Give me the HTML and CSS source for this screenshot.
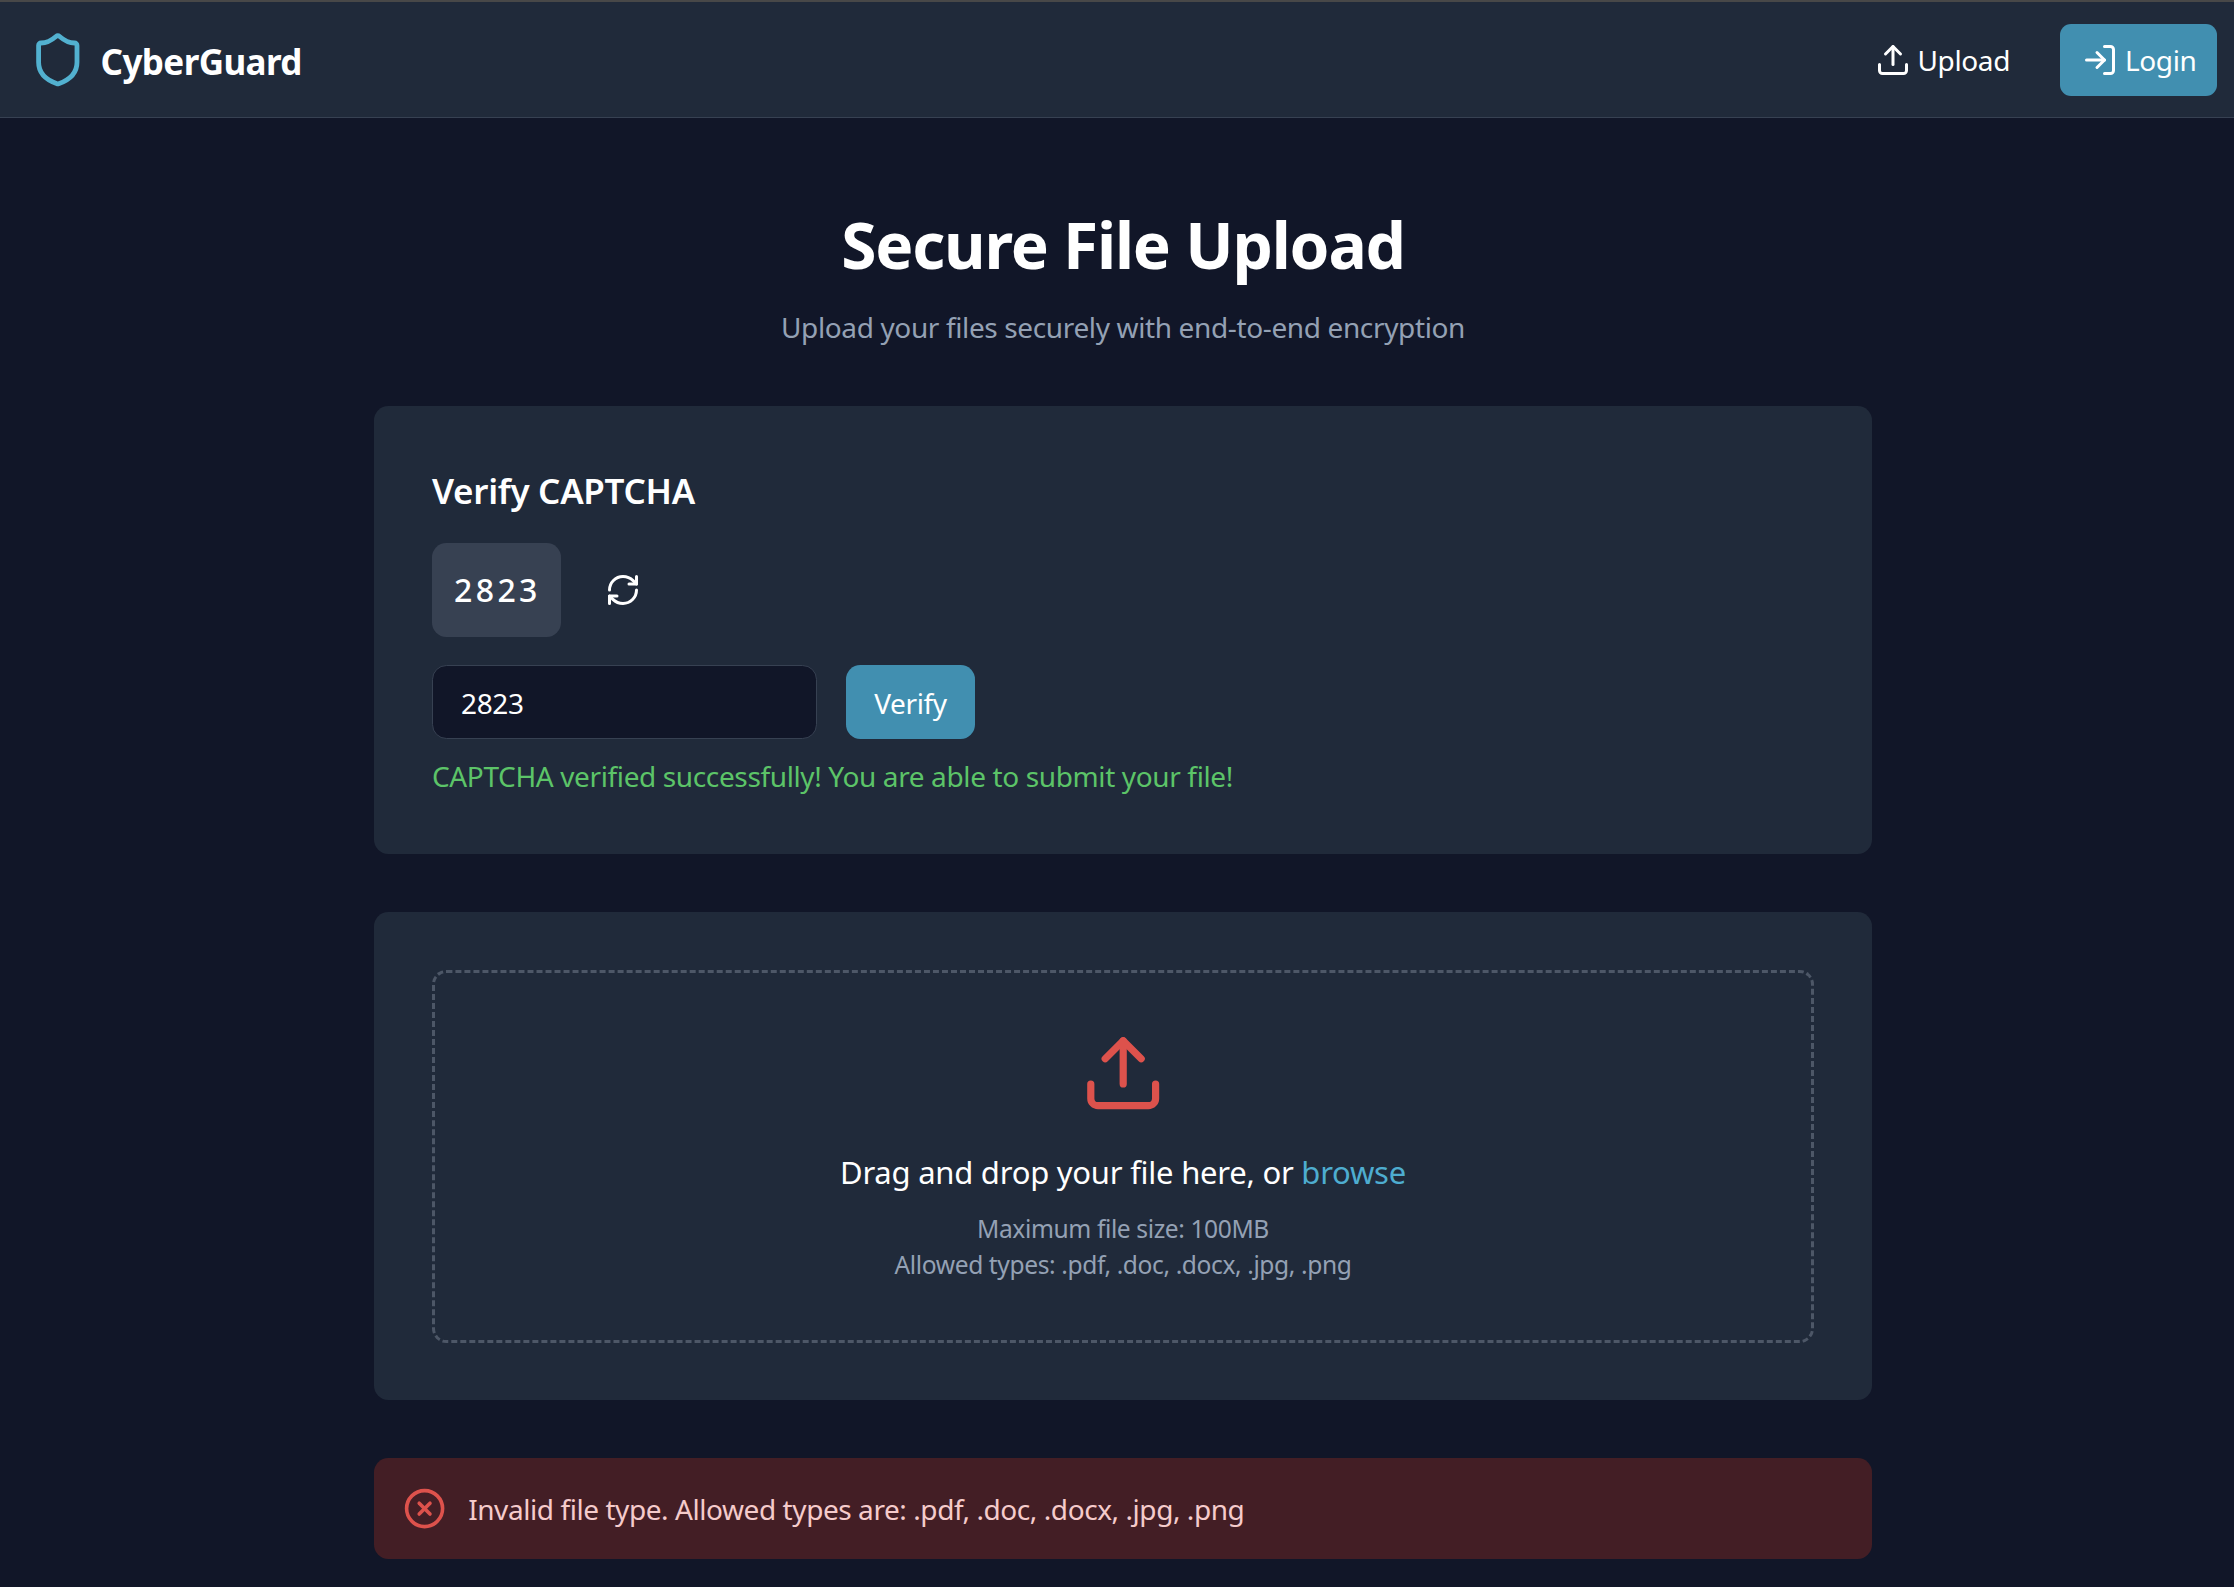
FILE: index.html
```html
<!DOCTYPE html>
<html lang="en">
<head>
<meta charset="utf-8">
<title>CyberGuard</title>
<link rel="stylesheet" href="styles.css">
</head>
<body>
<header class="navbar">
  <a class="brand">
    <svg class="icon brand-icon" viewBox="0 0 24 24"><path d="M20 13c0 5-3.500 7.500-7.660 8.950a1 1 0 0 1-.67-.01C7.500 20.500 4 18 4 13V6a1 1 0 0 1 1-1c2 0 4.500-1.200 6.240-2.720a1.170 1.170 0 0 1 1.520 0C14.510 3.810 17 5 19 5a1 1 0 0 1 1 1z"/></svg>
    <span class="brand-name">CyberGuard</span>
  </a>
  <nav class="nav-links">
    <a class="nav-link">
      <svg class="icon nav-icon" viewBox="0 0 24 24"><path d="M21 15v4a2 2 0 0 1-2 2H5a2 2 0 0 1-2-2v-4"/><path d="M17 8l-5-5-5 5"/><path d="M12 3v12"/></svg>
      <span class="nav-label">Upload</span>
    </a>
    <a class="login-button">
      <svg class="icon nav-icon" viewBox="0 0 24 24"><path d="M15 3h4a2 2 0 0 1 2 2v14a2 2 0 0 1-2 2h-4"/><path d="M10 17l5-5-5-5"/><path d="M15 12H3"/></svg>
      <span class="nav-label">Login</span>
    </a>
  </nav>
</header>
<main class="page">
  <h1 class="title">Secure File Upload</h1>
  <p class="subtitle">Upload your files securely with end-to-end encryption</p>

  <section class="card captcha">
    <h2 class="captcha-title">Verify CAPTCHA</h2>
    <div class="captcha-row">
      <div class="captcha-code">2823</div>
      <button class="refresh" aria-label="Refresh">
        <svg class="icon nav-icon" viewBox="0 0 24 24"><path d="M3 12a9 9 0 0 1 9-9 9.750 9.750 0 0 1 6.740 2.740L21 8"/><path d="M21 3v5h-5"/><path d="M21 12a9 9 0 0 1-9 9 9.750 9.750 0 0 1-6.740-2.740L3 16"/><path d="M8 16H3v5"/></svg>
      </button>
    </div>
    <div class="verify-row">
      <input class="captcha-input" type="text" value="2823">
      <button class="verify-button">Verify</button>
    </div>
    <p class="success">CAPTCHA verified successfully! You are able to submit your file!</p>
  </section>

  <section class="card upload">
    <div class="dropzone">
      <svg class="icon drop-icon" viewBox="0 0 24 24"><path d="M21 15v4a2 2 0 0 1-2 2H5a2 2 0 0 1-2-2v-4"/><path d="M17 8l-5-5-5 5"/><path d="M12 3v12"/></svg>
      <p class="drop-text">Drag and drop your file here, or <a class="browse">browse</a></p>
      <p class="hint hint-size">Maximum file size: 100MB</p>
      <p class="hint">Allowed types: .pdf, .doc, .docx, .jpg, .png</p>
    </div>
  </section>

  <div class="alert">
    <svg class="icon alert-icon" viewBox="0 0 24 24"><circle cx="12" cy="12" r="10"/><path d="M15 9l-6 6"/><path d="M9 9l6 6"/></svg>
    <span class="alert-text">Invalid file type. Allowed types are: .pdf, .doc, .docx, .jpg, .png</span>
  </div>
</main>
</body>
</html>
```
FILE: styles.css
```css
* { box-sizing: border-box; margin: 0; padding: 0; }
body {
  height: 1587px;
  overflow: hidden;
  background: #111628;
  color: #fff;
  font-family: "Noto Sans", "Open Sans", sans-serif;
  font-size: 28px;
  line-height: 43px;
  letter-spacing: -0.37px;
}
button, input { font: inherit; color: inherit; letter-spacing: inherit; border: 0; background: none; }
.icon { display: block; flex: none; fill: none; stroke: currentColor; stroke-width: 2; stroke-linecap: round; stroke-linejoin: round; }

.navbar {
  display: flex; align-items: center; justify-content: space-between;
  height: 118px; padding: 0 17px 0 29px;
  background: #202a3a;
  border-top: 2px solid #484848; border-bottom: 1px solid #374152;
}
.brand { display: flex; align-items: center; gap: 14px; }
.brand-icon { width: 57.6px; height: 57.6px; color: #52b1d0; }
.brand-name { padding-top: 3px; font-size: 35px; font-weight: 700; letter-spacing: -0.6px; }
.nav-links { display: flex; align-items: center; gap: 50px; }
.nav-link { display: flex; align-items: center; gap: 6px; }
.nav-icon { width: 36px; height: 36px; }
.nav-label { padding-top: 2px; }
.login-button {
  display: flex; align-items: center; gap: 7px;
  width: 157px; height: 72px; padding-left: 22px;
  border-radius: 11px; background: #418fb0;
}

.page { width: 1498px; margin: 0 0 0 374px; padding-top: 91px; }
.title { font-size: 64px; line-height: 72px; font-weight: 700; letter-spacing: -1.2px; text-align: center; }
.subtitle { margin: 25px 0 57px; color: #94a1b4; text-align: center; }
.card { padding: 58px; border-radius: 14.4px; background: #202a3a; margin-bottom: 58px; }
.captcha { height: 448px; padding-top: 60px; }
.captcha-title { font-size: 35px; line-height: 50px; font-weight: 600; letter-spacing: -0.3px; }
.captcha-row { display: flex; align-items: center; gap: 44px; margin-top: 27px; }
.captcha-code {
  width: 129px; height: 94px; padding-left: 22px;
  border-radius: 14.4px; background: #374152;
  font-size: 32px; line-height: 94px; font-weight: 500; letter-spacing: 3.4px;
}
.refresh { display: flex; }
.verify-row { display: flex; gap: 29px; margin-top: 28px; }
.captcha-input {
  width: 385px; height: 74px; padding: 2px 28px 0;
  border: 1px solid #374152; border-radius: 14.4px; background: #111628;
}
.verify-button { width: 129px; height: 74px; padding-top: 2px; border-radius: 14.4px; background: #418fb0; }
.success { margin-top: 16px; color: #5cc468; }

.upload { padding-bottom: 57px; }
.dropzone {
  display: flex; flex-direction: column; align-items: center;
  height: 373px; padding-top: 57px;
  border: 3px dashed #4d5767; border-radius: 14.4px;
}
.drop-icon { width: 86.4px; height: 86.4px; color: #dd524c; }
.drop-text { margin-top: 31px; font-size: 31px; line-height: 50px; letter-spacing: -0.24px; }
.browse { color: #4eadd0; }
.hint { color: #94a1b4; font-size: 24.6px; line-height: 36px; letter-spacing: -0.4px; }
.hint-size { margin-top: 14px; }

.alert {
  display: flex; align-items: center; gap: 22px;
  height: 101px; padding-left: 29px;
  border-radius: 14.4px; background: #431e25; color: #f5cbcb;
}
.alert-icon { width: 43.2px; height: 43.2px; color: #dd524c; }
.alert-text { padding-top: 2px; letter-spacing: -0.43px; }
.subtitle, .success, .drop-text, .hint, .alert-text { white-space: nowrap; }
```
